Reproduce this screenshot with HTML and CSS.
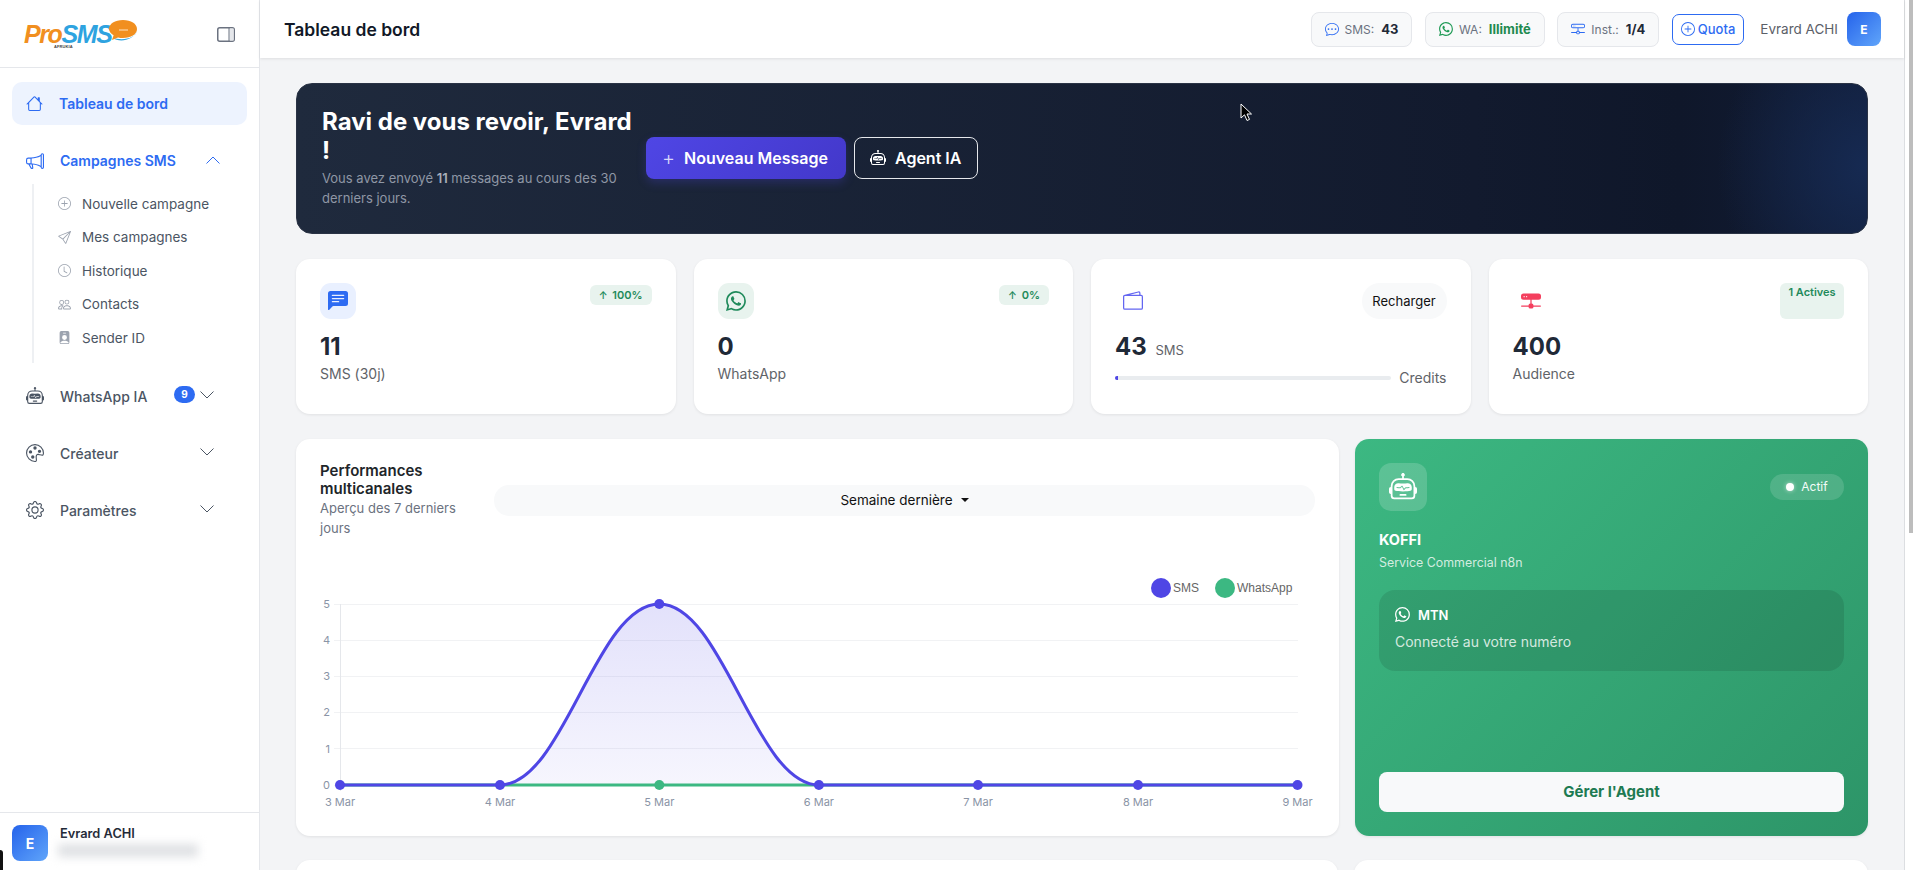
FILE: index.html
```html
<!DOCTYPE html>
<html lang="fr">
<head>
<meta charset="utf-8">
<title>ProSMS - Tableau de bord</title>
<link rel="stylesheet" href="styles.css">
</head>
<body>
<svg class="defs" aria-hidden="true">
  <symbol id="i-house" viewBox="0 0 16 16"><path d="M8.707 1.5a1 1 0 0 0-1.414 0L.646 8.146a.5.5 0 0 0 .708.708L2 8.207V13.5A1.5 1.5 0 0 0 3.5 15h9a1.5 1.5 0 0 0 1.5-1.5V8.207l.646.647a.5.5 0 0 0 .708-.708L13 5.793V2.5a.5.5 0 0 0-.5-.5h-1a.5.5 0 0 0-.5.5v1.293L8.707 1.5ZM13 7.207V13.5a.5.5 0 0 1-.5.5h-9a.5.5 0 0 1-.5-.5V7.207l5-5 5 5Z"/></symbol>
  <symbol id="i-megaphone" viewBox="0 0 16 16"><path d="M13 2.5a1.5 1.5 0 0 1 3 0v11a1.5 1.5 0 0 1-3 0v-.214c-2.162-1.241-4.49-1.843-6.912-2.083l.405 2.712A1 1 0 0 1 5.51 15.1h-.548a1 1 0 0 1-.916-.599l-1.85-3.49-.202-.003A2.014 2.014 0 0 1 0 9V7a2.02 2.02 0 0 1 1.992-2.013 74.663 74.663 0 0 0 2.483-.075c3.043-.154 6.148-.849 8.525-2.199V2.5zm1 0v11a.5.5 0 0 0 1 0v-11a.5.5 0 0 0-1 0zm-1 1.35c-2.344 1.205-5.209 1.842-8 2.033v4.233c.18.01.359.022.537.036 2.568.189 5.093.744 7.463 1.993V3.85zm-9 6.215v-4.13a95.09 95.09 0 0 1-1.992.052A1.02 1.02 0 0 0 1 7v2c0 .55.448 1.002 1.006 1.009A60.49 60.49 0 0 1 4 10.065zm-.657.975 1.609 3.037.01.024h.548l-.002-.014-.443-2.966a68.019 68.019 0 0 0-1.722-.082z"/></symbol>
  <symbol id="i-plus-circle" viewBox="0 0 16 16"><path d="M8 15A7 7 0 1 1 8 1a7 7 0 0 1 0 14zm0 1A8 8 0 1 0 8 0a8 8 0 0 0 0 16z"/><path d="M8 4a.5.5 0 0 1 .5.5v3h3a.5.5 0 0 1 0 1h-3v3a.5.5 0 0 1-1 0v-3h-3a.5.5 0 0 1 0-1h3v-3A.5.5 0 0 1 8 4z"/></symbol>
  <symbol id="i-send" viewBox="0 0 16 16"><path d="M15.854.146a.5.5 0 0 1 .11.54l-5.819 14.547a.75.75 0 0 1-1.329.124l-3.178-4.995L.643 7.184a.75.75 0 0 1 .124-1.33L15.314.037a.5.5 0 0 1 .54.11ZM6.636 10.07l2.761 4.338L14.13 2.576 6.636 10.07Zm6.787-8.201L1.591 6.602l4.339 2.76 7.494-7.493Z"/></symbol>
  <symbol id="i-clock" viewBox="0 0 16 16"><path d="M8 3.5a.5.5 0 0 0-1 0V9a.5.5 0 0 0 .252.434l3.5 2a.5.5 0 0 0 .496-.868L8 8.71V3.5z"/><path d="M8 16A8 8 0 1 0 8 0a8 8 0 0 0 0 16zm7-8A7 7 0 1 1 1 8a7 7 0 0 1 14 0z"/></symbol>
  <symbol id="i-people" viewBox="0 0 16 16"><path d="M15 14s1 0 1-1-1-4-5-4-5 3-5 4 1 1 1 1h8Zm-7.978-1A.261.261 0 0 1 7 12.996c.001-.264.167-1.03.76-1.72C8.312 10.629 9.282 10 11 10c1.717 0 2.687.63 3.24 1.276.593.69.758 1.457.76 1.72l-.008.002a.274.274 0 0 1-.014.002H7.022ZM11 7a2 2 0 1 0 0-4 2 2 0 0 0 0 4Zm3-2a3 3 0 1 1-6 0 3 3 0 0 1 6 0ZM6.936 9.28a5.88 5.88 0 0 0-1.23-.247A7.35 7.35 0 0 0 5 9c-4 0-5 3-5 4 0 .667.333 1 1 1h4.216A2.238 2.238 0 0 1 5 13c0-1.01.377-2.042 1.09-2.904.243-.294.526-.569.846-.816ZM4.92 10A5.493 5.493 0 0 0 4 13H1c0-.26.164-1.03.76-1.724.545-.636 1.492-1.256 3.16-1.275ZM1.5 5.5a3 3 0 1 1 6 0 3 3 0 0 1-6 0Zm3-2a2 2 0 1 0 0 4 2 2 0 0 0 0-4Z"/></symbol>
  <symbol id="i-badge" viewBox="0 0 16 16"><path d="M2 2a2 2 0 0 1 2-2h8a2 2 0 0 1 2 2v12a2 2 0 0 1-2 2H4a2 2 0 0 1-2-2V2zm4.5 0a.5.5 0 0 0 0 1h3a.5.5 0 0 0 0-1h-3zM8 11a3 3 0 1 0 0-6 3 3 0 0 0 0 6zm5 2.755C12.146 12.825 10.623 12 8 12s-4.146.826-5 1.755V14a1 1 0 0 0 1 1h8a1 1 0 0 0 1-1v-.245z"/></symbol>
  <symbol id="i-robot" viewBox="0 0 16 16"><path d="M6 12.5a.5.5 0 0 1 .5-.5h3a.5.5 0 0 1 0 1h-3a.5.5 0 0 1-.5-.5ZM3 8.062C3 6.76 4.235 5.765 5.53 5.886a26.58 26.58 0 0 0 4.94 0C11.765 5.765 13 6.76 13 8.062v1.157a.933.933 0 0 1-.765.935c-.845.147-2.34.346-4.235.346-1.895 0-3.39-.2-4.235-.346A.933.933 0 0 1 3 9.219V8.062Zm4.542-.827a.25.25 0 0 0-.217.068l-.92.9a24.767 24.767 0 0 1-1.871-.183.25.25 0 0 0-.068.495c.55.076 1.232.149 2.02.193a.25.25 0 0 0 .189-.071l.754-.736.847 1.71a.25.25 0 0 0 .404.062l.932-.97a25.286 25.286 0 0 0 1.922-.188.25.25 0 0 0-.068-.495c-.538.074-1.207.145-1.98.189a.25.25 0 0 0-.166.076l-.754.785-.842-1.7a.25.25 0 0 0-.182-.135Z"/><path d="M8.5 1.866a1 1 0 1 0-1 0V3h-2A4.5 4.5 0 0 0 1 7.5V8a1 1 0 0 0-1 1v2a1 1 0 0 0 1 1v1a2 2 0 0 0 2 2h10a2 2 0 0 0 2-2v-1a1 1 0 0 0 1-1V9a1 1 0 0 0-1-1v-.5A4.5 4.5 0 0 0 10.5 3h-2V1.866ZM14 7.5V13a1 1 0 0 1-1 1H3a1 1 0 0 1-1-1V7.5A3.5 3.5 0 0 1 5.5 4h5A3.5 3.5 0 0 1 14 7.5Z"/></symbol>
  <symbol id="i-palette" viewBox="0 0 16 16"><path d="M8 5a1.5 1.5 0 1 0 0-3 1.5 1.5 0 0 0 0 3zm4 3a1.5 1.5 0 1 0 0-3 1.5 1.5 0 0 0 0 3zM5.5 7a1.5 1.5 0 1 1-3 0 1.5 1.5 0 0 1 3 0zm.5 6a1.5 1.5 0 1 0 0-3 1.5 1.5 0 0 0 0 3z"/><path d="M16 8c0 3.15-1.866 2.585-3.567 2.07C11.42 9.763 10.465 9.473 10 10c-.603.683-.475 1.819-.351 2.92C9.826 14.495 9.996 16 8 16a8 8 0 1 1 8-8zm-8 7c.611 0 .654-.171.655-.176.078-.146.124-.464.07-1.119-.014-.168-.037-.37-.061-.591-.052-.464-.112-1.005-.118-1.462-.01-.707.083-1.61.704-2.314.369-.417.845-.578 1.272-.618.404-.038.812.026 1.16.104.343.077.702.186 1.025.284l.028.008c.346.105.658.199.953.266.653.148.904.083.991.024C14.717 9.38 15 9.161 15 8a7 7 0 1 0-7 7z"/></symbol>
  <symbol id="i-gear" viewBox="0 0 16 16"><path d="M8 4.754a3.246 3.246 0 1 0 0 6.492 3.246 3.246 0 0 0 0-6.492zM5.754 8a2.246 2.246 0 1 1 4.492 0 2.246 2.246 0 0 1-4.492 0z"/><path d="M9.796 1.343c-.527-1.79-3.065-1.79-3.592 0l-.094.319a.873.873 0 0 1-1.255.52l-.292-.16c-1.64-.892-3.433.902-2.54 2.541l.159.292a.873.873 0 0 1-.52 1.255l-.319.094c-1.79.527-1.79 3.065 0 3.592l.319.094a.873.873 0 0 1 .52 1.255l-.16.292c-.892 1.64.901 3.434 2.541 2.54l.292-.159a.873.873 0 0 1 1.255.52l.094.319c.527 1.79 3.065 1.79 3.592 0l.094-.319a.873.873 0 0 1 1.255-.52l.292.16c1.64.893 3.434-.902 2.54-2.541l-.159-.292a.873.873 0 0 1 .52-1.255l.319-.094c1.79-.527 1.79-3.065 0-3.592l-.319-.094a.873.873 0 0 1-.52-1.255l.16-.292c.893-1.64-.902-3.433-2.541-2.54l-.292.159a.873.873 0 0 1-1.255-.52l-.094-.319zm-2.633.283c.246-.835 1.428-.835 1.674 0l.094.319a1.873 1.873 0 0 0 2.693 1.115l.291-.16c.764-.415 1.6.42 1.184 1.185l-.159.292a1.873 1.873 0 0 0 1.116 2.692l.318.094c.835.246.835 1.428 0 1.674l-.319.094a1.873 1.873 0 0 0-1.115 2.693l.16.291c.415.764-.42 1.6-1.185 1.184l-.291-.159a1.873 1.873 0 0 0-2.693 1.116l-.094.318c-.246.835-1.428.835-1.674 0l-.094-.319a1.873 1.873 0 0 0-2.692-1.115l-.292.16c-.764.415-1.6-.42-1.184-1.185l.159-.291A1.873 1.873 0 0 0 1.945 8.93l-.319-.094c-.835-.246-.835-1.428 0-1.674l.319-.094A1.873 1.873 0 0 0 3.06 4.377l-.16-.292c-.415-.764.42-1.6 1.185-1.184l.292.159a1.873 1.873 0 0 0 2.692-1.115l.094-.319z"/></symbol>
  <symbol id="i-whatsapp" viewBox="0 0 16 16"><path d="M13.601 2.326A7.854 7.854 0 0 0 7.994 0C3.627 0 .068 3.558.064 7.926c0 1.399.366 2.76 1.057 3.965L0 16l4.204-1.102a7.933 7.933 0 0 0 3.79.965h.004c4.368 0 7.926-3.558 7.93-7.93A7.898 7.898 0 0 0 13.6 2.326zM7.994 14.521a6.573 6.573 0 0 1-3.356-.92l-.24-.144-2.494.654.666-2.433-.156-.251a6.56 6.56 0 0 1-1.007-3.505c0-3.626 2.957-6.584 6.591-6.584a6.56 6.56 0 0 1 4.66 1.931 6.557 6.557 0 0 1 1.928 4.66c-.004 3.639-2.961 6.592-6.592 6.592zm3.615-4.934c-.197-.099-1.17-.578-1.353-.646-.182-.065-.315-.099-.445.099-.133.197-.513.646-.627.775-.114.133-.232.148-.43.05-.197-.1-.836-.308-1.592-.985-.59-.525-.985-1.175-1.103-1.372-.114-.198-.011-.304.088-.403.087-.088.197-.232.296-.346.1-.114.133-.198.198-.33.065-.134.034-.248-.015-.347-.05-.099-.445-1.076-.612-1.47-.16-.389-.323-.335-.445-.34-.114-.007-.247-.007-.38-.007a.729.729 0 0 0-.529.247c-.182.198-.691.677-.691 1.654 0 .977.71 1.916.81 2.049.098.133 1.394 2.132 3.383 2.992.47.205.84.326 1.129.418.475.152.904.129 1.246.08.38-.058 1.171-.48 1.338-.943.164-.464.164-.86.114-.943-.049-.084-.182-.133-.38-.232z"/></symbol>
  <symbol id="i-chat-dots" viewBox="0 0 16 16"><path d="M5 8a1 1 0 1 1-2 0 1 1 0 0 1 2 0zm4 0a1 1 0 1 1-2 0 1 1 0 0 1 2 0zm3 1a1 1 0 1 0 0-2 1 1 0 0 0 0 2z"/><path d="m2.165 15.803.02-.004c1.83-.363 2.948-.842 3.468-1.105A9.06 9.06 0 0 0 8 15c4.418 0 8-3.134 8-7s-3.582-7-8-7-8 3.134-8 7c0 1.76.743 3.37 1.97 4.6a10.437 10.437 0 0 1-.524 2.318l-.003.011a10.722 10.722 0 0 1-.244.637c-.079.186.074.394.273.362a21.673 21.673 0 0 0 .693-.125zm.8-3.108a1 1 0 0 0-.287-.801C1.618 10.83 1 9.468 1 8c0-3.192 3.004-6 7-6s7 2.808 7 6c0 3.193-3.004 6-7 6a8.06 8.06 0 0 1-2.088-.272 1 1 0 0 0-.711.074c-.387.196-1.24.57-2.634.893a10.97 10.97 0 0 0 .398-2z"/></symbol>
  <symbol id="i-hdd" viewBox="0 0 16 16"><path d="M4.5 5a.5.5 0 1 0 0-1 .5.5 0 0 0 0 1zM3 4.5a.5.5 0 1 1-1 0 .5.5 0 0 1 1 0z"/><path d="M0 4a2 2 0 0 1 2-2h12a2 2 0 0 1 2 2v1a2 2 0 0 1-2 2H8.5v3a1.5 1.5 0 0 1 1.5 1.5h5.5a.5.5 0 0 1 0 1H10A1.5 1.5 0 0 1 8.5 14h-1A1.5 1.5 0 0 1 6 12.5H.5a.5.5 0 0 1 0-1H6A1.5 1.5 0 0 1 7.5 10V7H2a2 2 0 0 1-2-2V4zm1 0v1a1 1 0 0 0 1 1h12a1 1 0 0 0 1-1V4a1 1 0 0 0-1-1H2a1 1 0 0 0-1 1zm6 7.5v1a.5.5 0 0 0 .5.5h1a.5.5 0 0 0 .5-.5v-1a.5.5 0 0 0-.5-.5h-1a.5.5 0 0 0-.5.5z"/></symbol>
  <symbol id="i-hdd-fill" viewBox="0 0 16 16"><path d="M2 2a2 2 0 0 0-2 2v1a2 2 0 0 0 2 2h5.5v3A1.5 1.5 0 0 0 6 11.5H.5a.5.5 0 0 0 0 1H6A1.5 1.5 0 0 0 7.5 14h1a1.5 1.5 0 0 0 1.5-1.5h5.5a.5.5 0 0 0 0-1H10A1.5 1.5 0 0 0 8.5 10V7H14a2 2 0 0 0 2-2V4a2 2 0 0 0-2-2H2zm.5 3a.5.5 0 1 1 0-1 .5.5 0 0 1 0 1zm2 0a.5.5 0 1 1 0-1 .5.5 0 0 1 0 1z"/></symbol>
  <symbol id="i-chat-fill" viewBox="0 0 16 16"><path d="M0 2a2 2 0 0 1 2-2h12a2 2 0 0 1 2 2v8a2 2 0 0 1-2 2H4.414a1 1 0 0 0-.707.293L.854 15.146A.5.5 0 0 1 0 14.793V2zm3.5 1a.5.5 0 0 0 0 1h9a.5.5 0 0 0 0-1h-9zm0 2.5a.5.5 0 0 0 0 1h9a.5.5 0 0 0 0-1h-9zm0 2.5a.5.5 0 0 0 0 1h5a.5.5 0 0 0 0-1h-5z"/></symbol>
  <symbol id="i-wallet" viewBox="0 0 16 16"><path d="M12.136.326A1.5 1.5 0 0 1 14 1.78V3h.5A1.5 1.5 0 0 1 16 4.5v9a1.5 1.5 0 0 1-1.5 1.5h-13A1.5 1.5 0 0 1 0 13.5v-9a1.5 1.5 0 0 1 1.432-1.499L12.136.326zM5.562 3H13V1.78a.5.5 0 0 0-.621-.484L5.562 3zM1.5 4a.5.5 0 0 0-.5.5v9a.5.5 0 0 0 .5.5h13a.5.5 0 0 0 .5-.5v-9a.5.5 0 0 0-.5-.5h-13z"/></symbol>
  <symbol id="i-down" viewBox="0 0 14 8"><path d="M.5.5 7 7l6.5-6.5" fill="none" stroke="currentColor"/></symbol>
  <symbol id="i-up" viewBox="0 0 14 8"><path d="M.5 7.5 7 1l6.5 6.5" fill="none" stroke="currentColor"/></symbol>
</svg>

<div class="app">
  <aside class="sidebar">
    <div class="brand">
      <div class="logo">
        <span class="logo-pro">Pro</span><span class="logo-sms">SMS</span>
        <svg class="logo-bubble" viewBox="0 0 29 22"><path d="M3 18c9 5 21 2 25-7-2 7-12 10-25 7Z" fill="#2ea3e0"/><path d="M14 0c8 0 14 3.800 14 9s-6 9-14 9c-2 0-3.500-.2-5-.6L3 20l1.600-4.800C2 13.600 0 11.500 0 9c0-5.200 6-9 14-9Z" fill="#f18f1f"/><path d="M10 10h9" stroke="#fbe3c4" stroke-width="1"/></svg>
        <span class="logo-sub">AFRUKIA</span>
      </div>
      <svg class="toggle" viewBox="0 0 18 15"><rect x=".75" y=".75" width="16.500" height="13.500" rx="2" fill="none" stroke="currentColor" stroke-width="1.500"/><rect x="11.500" y="1" width="1.200" height="13" fill="currentColor"/><rect x="12.700" y="1.500" width="4" height="12" fill="#e5e7eb"/></svg>
    </div>
    <nav class="nav">
      <a class="item active"><svg class="ic"><use href="#i-house"/></svg><span>Tableau de bord</span></a>
      <div class="group">
        <a class="item open"><svg class="ic"><use href="#i-megaphone"/></svg><span>Campagnes SMS</span><svg class="chev"><use href="#i-up"/></svg></a>
        <ul class="sub">
          <li><svg class="sic"><use href="#i-plus-circle"/></svg>Nouvelle campagne</li>
          <li><svg class="sic"><use href="#i-send"/></svg>Mes campagnes</li>
          <li><svg class="sic"><use href="#i-clock"/></svg>Historique</li>
          <li><svg class="sic"><use href="#i-people"/></svg>Contacts</li>
          <li><svg class="sic"><use href="#i-badge"/></svg>Sender ID</li>
        </ul>
      </div>
      <a class="item closed"><svg class="ic"><use href="#i-robot"/></svg><span>WhatsApp IA</span><b class="count">9</b><svg class="chev"><use href="#i-down"/></svg></a>
      <a class="item closed"><svg class="ic"><use href="#i-palette"/></svg><span>Créateur</span><svg class="chev"><use href="#i-down"/></svg></a>
      <a class="item closed"><svg class="ic"><use href="#i-gear"/></svg><span>Paramètres</span><svg class="chev"><use href="#i-down"/></svg></a>
    </nav>
    <div class="foot">
      <div class="avatar big">E</div>
      <div class="foot-name">Evrard ACHI</div>
      <div class="redact"></div>
    </div>
  </aside>

  <div class="main">
    <header class="top">
      <h1>Tableau de bord</h1>
      <div class="top-right">
        <div class="pill"><svg class="pic blue"><use href="#i-chat-dots"/></svg><span class="pl">SMS:</span><b>43</b></div>
        <div class="pill"><svg class="pic green"><use href="#i-whatsapp"/></svg><span class="pl">WA:</span><b class="green">Illimité</b></div>
        <div class="pill"><svg class="pic blue"><use href="#i-hdd"/></svg><span class="pl">Inst.:</span><b>1/4</b></div>
        <a class="quota"><svg class="pic"><use href="#i-plus-circle"/></svg>Quota</a>
        <div class="who">Evrard ACHI</div>
        <div class="avatar">E</div>
      </div>
    </header>

    <main class="content">
      <section class="hero">
        <div class="hero-text">
          <h2>Ravi de vous revoir, Evrard !</h2>
          <p>Vous avez envoyé <strong>11</strong> messages au cours des 30 derniers jours.</p>
        </div>
        <a class="btn primary"><span class="plus">+</span>Nouveau Message</a>
        <a class="btn ghost"><svg class="bic"><use href="#i-robot"/></svg>Agent IA</a>
      </section>

      <section class="stats">
        <article class="card stat">
          <div class="stat-top">
            <div class="sbox b-blue"><svg class="sbi c-blue"><use href="#i-chat-fill"/></svg></div>
            <span class="trend"><i>↑</i> 100%</span>
          </div>
          <div class="val">11</div>
          <div class="lab">SMS (30j)</div>
        </article>
        <article class="card stat">
          <div class="stat-top">
            <div class="sbox b-green"><svg class="sbi c-green"><use href="#i-whatsapp"/></svg></div>
            <span class="trend"><i>↑</i> 0%</span>
          </div>
          <div class="val">0</div>
          <div class="lab">WhatsApp</div>
        </article>
        <article class="card stat">
          <div class="stat-top">
            <div class="sbox"><svg class="sbi c-indigo"><use href="#i-wallet"/></svg></div>
            <span class="recharge">Recharger</span>
          </div>
          <div class="val">43 <small>SMS</small></div>
          <div class="prog-row">
            <div class="prog"><div class="prog-bar"></div></div>
            <span class="lab">Credits</span>
          </div>
        </article>
        <article class="card stat">
          <div class="stat-top">
            <div class="sbox"><svg class="sbi c-rose"><use href="#i-hdd-fill"/></svg></div>
            <span class="actives">1 Actives</span>
          </div>
          <div class="val">400</div>
          <div class="lab">Audience</div>
        </article>
      </section>

      <section class="row">
        <article class="card chart-card">
          <div class="chart-head">
            <div class="chart-title">
              <h3>Performances multicanales</h3>
              <p>Aperçu des 7 derniers jours</p>
            </div>
            <div class="select">Semaine dernière<i class="caret"></i></div>
          </div>
          <svg class="chart" viewBox="0 0 995 255" width="995" height="255">
            <defs>
              <linearGradient id="area" x1="0" y1="0" x2="0" y2="1">
                <stop offset="0" stop-color="#4f46e5" stop-opacity=".16"/>
                <stop offset="1" stop-color="#4f46e5" stop-opacity=".05"/>
              </linearGradient>
            </defs>
            <g class="grid">
              <path d="M14 44.500H978M14 80.500H978M14 116.500H978M14 152.500H978M14 188.500H978M14 225.500H978"/>
            </g>
            <path class="axis" d="M20.500 44V231"/>
            <g class="ylab">
              <text x="10" y="48">5</text>
              <text x="10" y="84">4</text>
              <text x="10" y="120">3</text>
              <text x="10" y="156">2</text>
              <text x="10" y="193">1</text>
              <text x="10" y="229">0</text>
            </g>
            <g class="xlab">
              <text x="20" y="246">3 Mar</text>
              <text x="180" y="246">4 Mar</text>
              <text x="339.300" y="246">5 Mar</text>
              <text x="498.900" y="246">6 Mar</text>
              <text x="658" y="246">7 Mar</text>
              <text x="818" y="246">8 Mar</text>
              <text x="977.500" y="246">9 Mar</text>
            </g>
            <path class="fill" d="M180 225C243.700 225 275.600 44 339.300 44C403 44 435.200 225 498.900 225Z"/>
            <path class="green-line" d="M20 225H977.500"/>
            <circle class="gdot" cx="339.300" cy="225" r="5"/>
            <path class="blue-line" d="M20 225H180C243.700 225 275.600 44 339.300 44C403 44 435.200 225 498.900 225H977.500"/>
            <g class="bdot">
              <circle cx="20" cy="225" r="5"/>
              <circle cx="180" cy="225" r="5"/>
              <circle cx="339.300" cy="44" r="5"/>
              <circle cx="498.900" cy="225" r="5"/>
              <circle cx="658" cy="225" r="5"/>
              <circle cx="818" cy="225" r="5"/>
              <circle cx="977.500" cy="225" r="5"/>
            </g>
            <g class="legend">
              <ellipse cx="841" cy="28" rx="10" ry="10" fill="#4f46e5"/>
              <text x="853" y="32">SMS</text>
              <ellipse cx="905" cy="28" rx="10" ry="10" fill="#3cb882"/>
              <text x="917" y="32">WhatsApp</text>
            </g>
          </svg>
        </article>

        <article class="agent">
          <div class="agent-top">
            <div class="agent-ic"><svg class="agi"><use href="#i-robot"/></svg></div>
            <span class="actif"><i class="dot"></i>Actif</span>
          </div>
          <h3>KOFFI</h3>
          <p class="agent-sub">Service Commercial n8n</p>
          <div class="mtn">
            <div class="mtn-name"><svg class="mti"><use href="#i-whatsapp"/></svg>MTN</div>
            <div class="mtn-txt">Connecté au votre numéro</div>
          </div>
          <a class="manage">Gérer l'Agent</a>
        </article>
      </section>

      <section class="row below">
        <div class="card stub"></div>
        <div class="card stub"></div>
      </section>
    </main>
  </div>
  <div class="scroll"><div class="thumb"></div></div>
</div>

<svg class="cursor" viewBox="0 0 12 19"><path d="M1 1v14l3.500-3.200L7 17.500l2.500-1.100L7 11h4.500Z" fill="#000" stroke="#fff" stroke-width="1"/></svg>
<div class="corner"></div>
</body>
</html>
```
FILE: styles.css
```css
* { box-sizing: border-box; margin: 0; padding: 0; }
html, body { height: 100%; overflow: hidden; }
body { font-family: Inter, "Liberation Sans", sans-serif; color: #1f2937; background: #fff; }
.defs { position: absolute; width: 0; height: 0; }
svg { fill: currentColor; flex: none; }
ul { list-style: none; }
i { font-style: normal; }

.app { display: flex; height: 870px; overflow: hidden; }

/* sidebar */
.sidebar { width: 260px; flex: none; display: flex; flex-direction: column; background: #fff; border-right: 1px solid #e5e7eb; position: relative; }
.brand { height: 68px; flex: none; display: flex; align-items: center; justify-content: space-between; padding: 0 24px; border-bottom: 1px solid #e5e7eb; }
.logo { position: relative; width: 113px; height: 28px; font-family: "Liberation Sans", sans-serif; font-style: italic; font-weight: 700; font-size: 25px; line-height: 28px; letter-spacing: -1.4px; white-space: nowrap; }
.logo-pro { color: #f18f1f; }
.logo-sms { color: #2ea3e0; }
.logo-bubble { position: absolute; left: 85px; top: 0; width: 29px; height: 22px; }
.logo-sub { position: absolute; left: 30px; top: 24px; font-size: 4px; line-height: 5px; letter-spacing: .1px; font-style: normal; color: #444; }
.toggle { width: 18px; height: 15px; color: #6b7280; margin-top: 2px; }

.nav { flex: 1; display: flex; flex-direction: column; gap: 14px; padding: 14px 12px 0; }
.item { height: 43px; display: flex; align-items: center; padding-left: 14px; border-radius: 10px; font-size: 14px; font-weight: 500; color: #4b5563; }
.item > span { margin-left: 16px; }
.ic { width: 18px; height: 18px; color: #4b5563; }
.active { background: #edf3fe; color: #2d6bf2; font-weight: 600; }
.active .ic { color: #2d6bf2; width: 17px; height: 17px; }
.open { color: #2d6bf2; font-weight: 600; padding-right: 27px; }
.open .ic { color: #2d6bf2; }
.closed { padding-right: 33px; }
.chev { width: 14px; height: 8px; margin-left: auto; color: #4b5563; margin-top: -2px; }
.open .chev { color: #2d6bf2; }
.count { margin-left: auto; width: 21px; height: 17px; border-radius: 9px; background: #2d6bf2; color: #fff; font-size: 10px; font-weight: 700; line-height: 16px; text-align: center; margin-top: -4px; }
.count + .chev { margin-left: 5px; }
.sub { margin: 2px 0 -2px 20px; border-left: 2px solid #eef0f3; padding: 3px 0 8px 24px; }
.sub li { height: 33.5px; display: flex; align-items: center; gap: 11px; font-size: 13.5px; color: #4b5563; font-weight: 400; }
.sic { width: 13px; height: 13px; color: #9ca3af; }

.foot { height: 58px; flex: none; border-top: 1px solid #e5e7eb; padding: 12px 12px; display: flex; gap: 12px; position: relative; }
.avatar { width: 34px; height: 34px; border-radius: 8px; background: linear-gradient(135deg, #2563eb, #60a5fa); color: #fff; font-size: 12px; font-weight: 700; display: flex; align-items: center; justify-content: center; }
.avatar.big { width: 36px; height: 36px; font-size: 14px; }
.foot-name { font-size: 12.8px; font-weight: 600; color: #1f2937; line-height: 18px; }
.redact { position: absolute; left: 58px; top: 31px; width: 140px; height: 13px; background: #dfe1e4; filter: blur(5px); }

/* main */
.main { flex: 1; min-width: 0; display: flex; flex-direction: column; background: #f3f4f6; border-right: 1px solid #dcdee1; }
.top { height: 58px; flex: none; display: flex; align-items: center; justify-content: space-between; padding: 0 23px 0 24px; background: #fff; box-shadow: 0 1px 3px rgba(0,0,0,.09); position: relative; }
.top h1 { font-size: 17.5px; font-weight: 600; color: #111827; }
.top-right { display: flex; align-items: center; }
.pill { height: 35px; display: flex; align-items: center; padding: 0 13px; margin-right: 12.5px; background: #f8f9fa; border: 1px solid #e5e7eb; border-radius: 8px; font-size: 12px; }
.pl { color: #6b7280; margin: 0 7px 0 6px; }
.pill b { font-size: 13px; font-weight: 700; color: #1f2937; }
.pill b.green { color: #1f8a4f; }
.pic { width: 14px; height: 14px; }
.pic.blue { color: #2d6bf2; }
.pic.green { color: #1f9a55; }
.quota { height: 31px; display: flex; align-items: center; gap: 3px; padding: 0 8px; border: 1px solid #2d6bf2; border-radius: 7px; color: #2d6bf2; font-size: 13px; font-weight: 500; }
.who { font-size: 13.5px; color: #5b6068; margin: 0 9px 0 16px; }

.content { flex: 1; overflow: hidden; padding: 25px 36px 0; }

/* hero */
.hero { height: 150.5px; display: flex; align-items: center; padding: 0 25px; margin-bottom: 25px; border-radius: 16px; border: 1px solid #2a3345; background: radial-gradient(ellipse 150px 160px at 100% 55%, #162a52 0%, rgba(22,42,82,0) 100%), linear-gradient(90deg, #1f2a3d 0%, #121a2e 75%, #0f172a 88%, #111c36 100%); color: #fff; }
.hero-text { width: 312px; margin-right: 12px; flex: none; }
.hero h2 { font-size: 24px; font-weight: 700; line-height: 28.8px; color: #fff; }
.hero p { font-size: 13px; line-height: 20px; color: #8f97a5; margin-top: 2px; }
.hero strong { color: #a9afba; font-weight: 600; }
.btn { height: 42px; display: flex; align-items: center; font-size: 16px; font-weight: 600; color: #fff; border-radius: 8px; }
.primary { width: 200px; padding-left: 16px; margin-right: 8px; background: linear-gradient(135deg, #4f46e5, #4338ca); box-shadow: 0 4px 10px rgba(79,70,229,.25); }
.plus { font-size: 20px; font-weight: 300; margin-right: 9px; line-height: 1; color: #d7d5fb; }
.ghost { width: 124px; padding-left: 15px; border: 1px solid #e5e7eb; }
.bic { width: 16px; height: 16px; margin-right: 9px; }

/* stat cards */
.card { background: #fff; border-radius: 14px; box-shadow: 0 1px 3px rgba(0,0,0,.08); }
.stats { display: grid; grid-template-columns: repeat(4, 1fr); gap: 18px; margin-bottom: 25px; }
.stat { height: 155px; padding: 24px; }
.stat-top { display: flex; justify-content: space-between; height: 36px; margin-bottom: 13px; }
.sbox { width: 36px; height: 36px; border-radius: 11px; display: flex; align-items: center; justify-content: center; }
.b-blue { background: #e9f0ff; }
.b-green { background: #e8f3ee; }
.sbi { width: 20px; height: 20px; }
.c-blue { color: #2d6bf2; }
.c-green { color: #1f8a5b; }
.c-indigo { color: #6366f1; }
.c-rose { color: #f43f5e; }
.trend { height: 20px; margin-top: 2px; padding: 0 9px; background: #e8f3ee; border-radius: 6px; color: #1f8a5b; font-size: 11px; font-weight: 600; line-height: 20px; }
.trend i { font-size: 10px; margin-right: 2px; }
.recharge { width: 85px; border-radius: 18px; background: #f8f9fa; font-size: 13px; line-height: 36px; text-align: center; color: #111; }
.actives { width: 64px; border-radius: 6px; background: #e8f3ee; color: #1f8a5b; font-size: 11px; font-weight: 600; line-height: 15px; padding-top: 2px; text-align: center; }
.val { font-size: 24px; font-weight: 700; line-height: 29px; color: #1f2937; }
.val small { font-size: 13px; font-weight: 400; color: #5f6368; margin-left: 3px; }
.lab { font-size: 14px; color: #5f6368; line-height: 20px; margin-top: 3px; }
.prog-row { display: flex; align-items: center; gap: 8px; margin-top: 3px; }
.prog { flex: 1; height: 4px; border-radius: 2px; background: #e9ecef; overflow: hidden; }
.prog-bar { width: 1%; height: 100%; background: #4f46e5; }
.prog-row .lab { margin: 0; }

/* row 2 */
.row { display: grid; grid-template-columns: 1043fr 514fr; gap: 16px; margin-bottom: 24px; }
.chart-card { height: 397px; padding: 23px 24px 0; }
.chart-head { display: flex; height: 76px; margin-bottom: 22px; }
.chart-title { width: 150px; margin-right: 24px; flex: none; }
.chart-title h3 { font-size: 15px; font-weight: 600; line-height: 18px; color: #212529; }
.chart-title p { font-size: 13px; line-height: 20px; color: #6b7280; }
.select { flex: 1; height: 31px; margin-top: 0; margin-right: -24px; max-width: 821px; margin-top: 23px; display: flex; align-items: center; justify-content: center; background: #f8f9fa; border-radius: 15px; font-size: 13.5px; color: #111; }
.caret { width: 0; height: 0; margin-left: 8px; border-left: 4px solid transparent; border-right: 4px solid transparent; border-top: 4px solid #111; }
.chart { display: block; font-family: Inter, sans-serif; }
.grid path { fill: none; stroke: #f1f2f4; stroke-width: 1; }
.axis { fill: none; stroke: #e5e7eb; stroke-width: 1; }
.ylab text { font-size: 11px; fill: #8a94a6; text-anchor: end; }
.xlab text { font-size: 11px; fill: #8a94a6; text-anchor: middle; }
.fill { fill: url(#area); stroke: none; }
.green-line { fill: none; stroke: #3cb882; stroke-width: 3; }
.blue-line { fill: none; stroke: #4f46e5; stroke-width: 3; }
.gdot { fill: #3cb882; }
.bdot circle { fill: #4f46e5; }
.legend text { font-family: "Liberation Sans", Arial, sans-serif; font-size: 12px; fill: #666; }

.agent { height: 397px; border-radius: 14px; padding: 24px; display: flex; flex-direction: column; color: #fff; background: linear-gradient(135deg, #3cb882 0%, #2d9568 100%); box-shadow: 0 1px 3px rgba(0,0,0,.08); }
.agent-top { display: flex; justify-content: space-between; align-items: center; height: 48px; margin-bottom: 20px; }
.agent-ic { width: 48px; height: 48px; border-radius: 12px; background: rgba(255,255,255,.17); display: flex; align-items: center; justify-content: center; }
.agi { width: 28px; height: 28px; color: #fff; }
.actif { height: 26px; width: 74px; display: flex; align-items: center; justify-content: center; gap: 7px; border-radius: 13px; background: rgba(255,255,255,.14); font-size: 12px; color: #f3fbf7; }
.dot { width: 8px; height: 8px; border-radius: 50%; background: #fff; box-shadow: 0 0 4px rgba(255,255,255,.6); }
.agent h3 { font-size: 14.5px; font-weight: 700; line-height: 18px; }
.agent-sub { font-size: 12.4px; line-height: 16px; margin-top: 6px; color: rgba(255,255,255,.78); }
.mtn { height: 81px; margin-top: 19px; padding: 15px 16px; border-radius: 16px; background: rgba(0,0,0,.1); }
.mtn-name { display: flex; align-items: center; gap: 8px; font-size: 13px; font-weight: 600; line-height: 20px; }
.mti { width: 15px; height: 15px; }
.mtn-txt { font-size: 14px; line-height: 20px; margin-top: 7px; color: rgba(255,255,255,.8); }
.manage { margin-top: auto; height: 40px; border-radius: 8px; background: #f8f9fa; color: #1e7b52; font-size: 15px; font-weight: 700; display: flex; align-items: center; justify-content: center; }

.below { margin-bottom: 0; }
.stub { height: 120px; }

/* scroll rail */
.scroll { width: 8px; flex: none; background: #fff; }
.thumb { width: 4px; height: 533px; margin-left: 4px; background: #bdbdbd; }

/* overlays */
.cursor { position: absolute; left: 1240px; top: 103px; width: 12px; height: 19px; }
.corner { position: absolute; left: 0; top: 850px; width: 3px; height: 20px; background: #111; border-top-right-radius: 3px; }
```
